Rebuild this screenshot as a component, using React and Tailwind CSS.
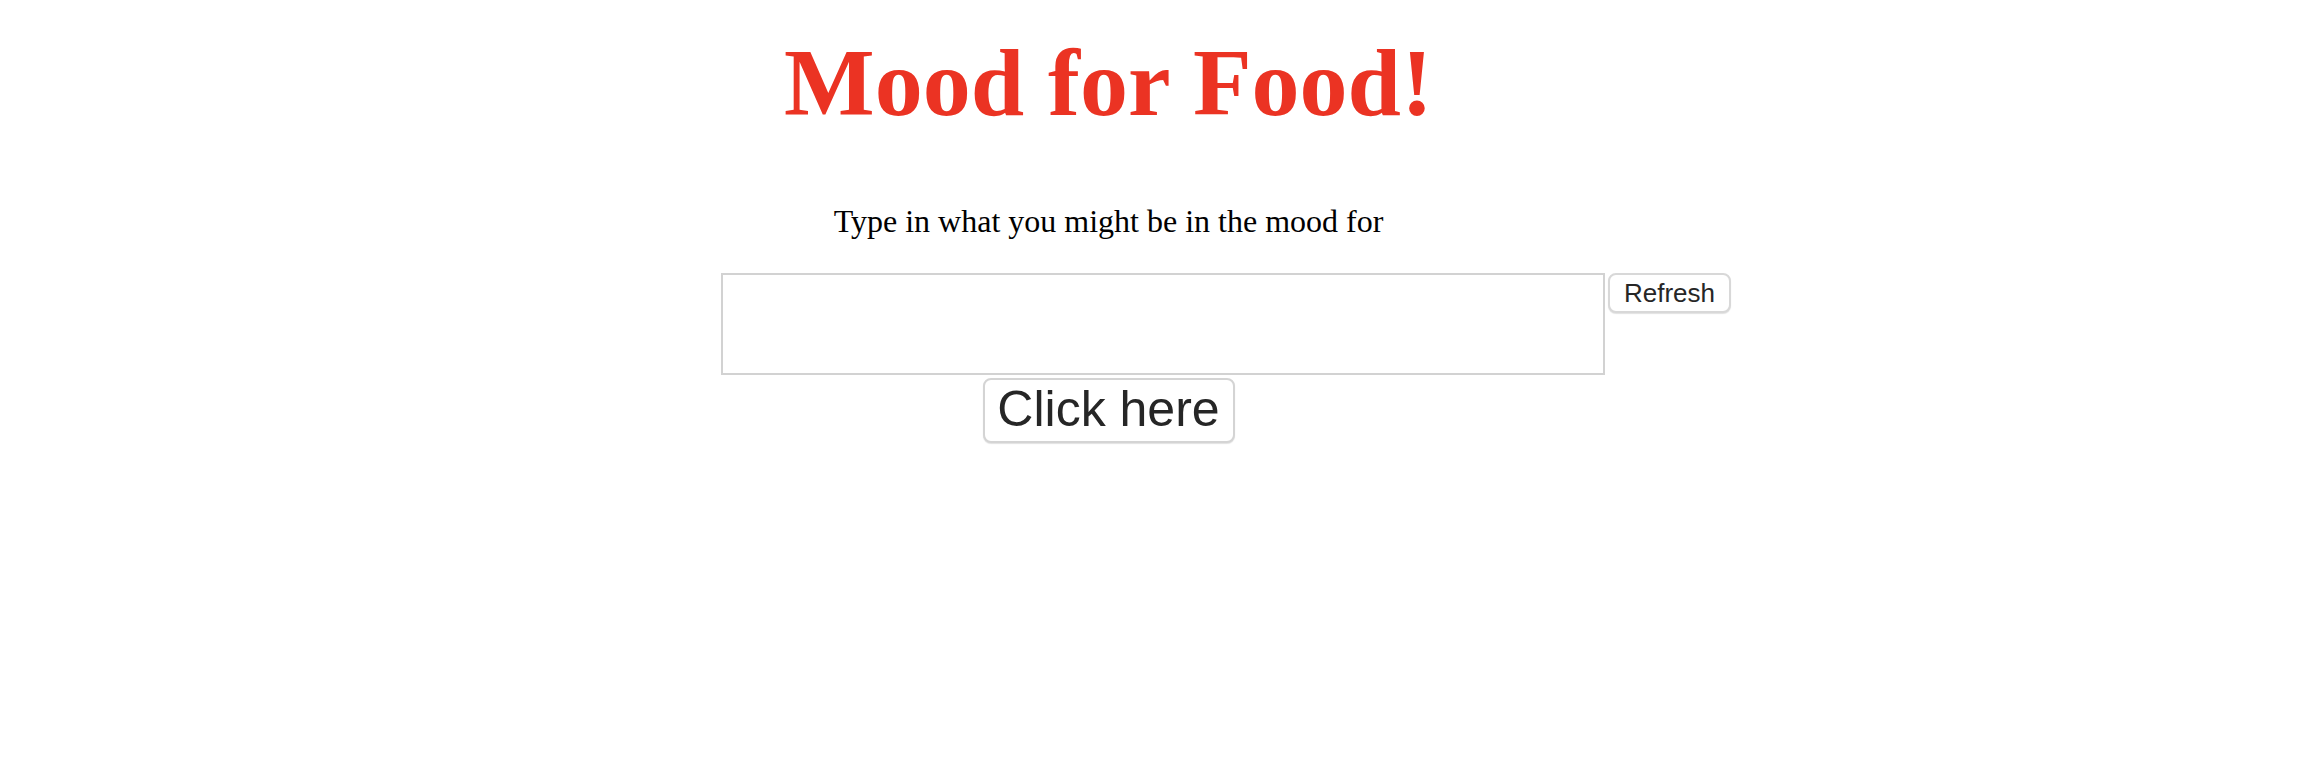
import React, { useState } from "react";

const App = () => {
    const [mood, setMood] = useState("");

    return (
        <div className="min-h-[762px] w-full bg-white">
            <div className="w-[2217px] flex flex-col items-center">
                {/* Title */}
                <h1 className="mt-[35px] text-[96px] leading-[96px] font-bold text-[#eb3323] font-['Liberation_Serif',serif]">
                    Mood for Food!
                </h1>

                {/* Prompt */}
                <p className="mt-[74px] text-[32px] leading-[32px] text-black font-['Liberation_Serif',serif]">
                    Type in what you might be in the mood for
                </p>
            </div>

            {/* Input row */}
            <div className="mt-[36px] ml-[721px] flex items-start gap-[3px]">
                <textarea
                    value={mood}
                    onChange={(e) => setMood(e.target.value)}
                    className="w-[884px] h-[102px] border-2 border-[#d2d2d2] bg-white resize-none outline-none p-1 text-[26px] font-['Liberation_Sans',sans-serif]"
                />
                <button
                    onClick={() => setMood("")}
                    className="w-[123px] h-[40px] flex items-center justify-center rounded-[8px] border-2 border-[#d8d8d8] bg-white text-[26px] leading-none text-[#262626] shadow-[0_1px_1px_rgba(0,0,0,0.12)] font-['Liberation_Sans',sans-serif]"
                >
                    Refresh
                </button>
            </div>

            <div className="w-[2217px] flex justify-center mt-[3px]">
                <button className="w-[252px] h-[65px] flex items-center justify-center pb-[3px] rounded-[8px] border-2 border-[#d4d4d4] bg-white text-[50px] leading-none text-[#262626] shadow-[0_1px_1px_rgba(0,0,0,0.12)] font-['Liberation_Sans',sans-serif]">
                    Click here
                </button>
            </div>
        </div>
    );
};

export default App;
